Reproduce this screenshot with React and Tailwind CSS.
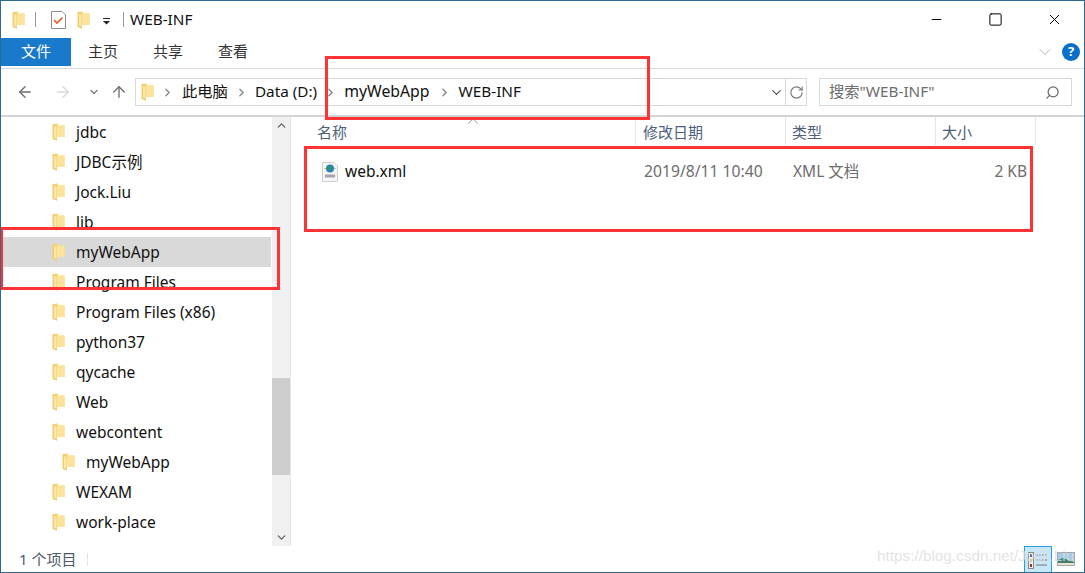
import { ArrowLeft, ArrowRight, ArrowUp, ChevronDown, ChevronRight, ChevronUp, RotateCw, Search, Minus, X, Square } from "lucide-react";

const FONT = "font-['Noto_Sans','Noto_Sans_CJK_SC',sans-serif]";

const navItems = [
  { name: "jdbc" },
  { name: "JDBC示例" },
  { name: "Jock.Liu" },
  { name: "lib" },
  { name: "myWebApp", selected: true },
  { name: "Program Files" },
  { name: "Program Files (x86)" },
  { name: "python37" },
  { name: "qycache" },
  { name: "Web" },
  { name: "webcontent" },
  { name: "myWebApp", child: true },
  { name: "WEXAM" },
  { name: "work-place" },
];

const Folder = ({ className = "" }) => (
  <svg width="13" height="18" viewBox="0 0 13 18" className={`shrink-0 ${className}`}>
    <path d="M1 1 L6 0.5 V2.5 H12.5 V14 H5 V15 H1 Z" fill="#f8d878" />
    <path d="M5 2.5 H12.5 V14 H5 Z" fill="#fbe39c" />
    <path d="M0.5 1 L5 2.5 V17.8 L0.5 16 Z" fill="#f3cb6c" />
    <path d="M2 3 L4.5 3.8 V15.8 L2 15 Z" fill="#fbe7a8" />
  </svg>
);

const XmlIcon = () => (
  <svg width="18" height="20" viewBox="0 0 18 20" className="shrink-0">
    <path d="M1.5 0.5 H13 L16.5 4 V19.5 H1.5 Z" fill="#f5f5f5" stroke="#cfcfcf" />
    <path d="M3 6.5 H5 M13 6.5 H15" stroke="#b9c4c9" />
    <rect x="4" y="12.5" width="10" height="3" fill="#a3a3b0" />
    <circle cx="9" cy="6.5" r="4" fill="#2b7fc4" />
    <path d="M6 5 L8.8 3.2 L10.2 5.5 L8.2 8.8 L6.4 7.5 Z" fill="#2f9d4e" />
    <path d="M10.6 7.5 L12.4 6.5 L11.4 9.2 Z" fill="#2f9d4e" />
  </svg>
);

const Chevron = () => <ChevronRight size={13} strokeWidth={2.4} className="text-[#858585] shrink-0" />;

const App = () => {
  return (
    <div className={`relative flex flex-col w-[1085px] h-[573px] overflow-hidden bg-white border border-[#2c6a94] text-[15.5px] text-[#111] ${FONT}`}>
      {/* title bar */}
      <div className="flex items-center h-[37px] shrink-0 pl-[11px]">
        <Folder />
        <div className="w-px h-[15px] bg-[#9a9a9a] ml-[10px] mr-[15px]" />
        <svg width="15" height="18" viewBox="0 0 15 18" className="shrink-0">
          <path d="M0.5 0.5 H11 L14.5 4 V17.5 H0.5 Z" fill="#fff" stroke="#8c8c8c" />
          <path d="M3 9 L6 12 L11.5 6.5" fill="none" stroke="#e8562a" strokeWidth="1.6" />
        </svg>
        <Folder className="ml-[11px]" />
        <svg width="9" height="7" viewBox="0 0 9 7" className="ml-[12px] mt-1 shrink-0">
          <rect x="1" y="0" width="7" height="1" fill="#222" />
          <path d="M1 3 H8 L4.5 6.5 Z" fill="#222" />
        </svg>
        <div className="w-px h-[15px] bg-[#9a9a9a] ml-[12px] mr-[6px]" />
        <span className="text-[15.3px] leading-none">WEB-INF</span>
        <div className="flex items-center ml-auto pr-[7px]">
          <div className="w-[46px] flex justify-center"><Minus size={15} strokeWidth={1} absoluteStrokeWidth className="text-black" /></div>
          <div className="w-[72px] flex justify-center"><Square size={15} strokeWidth={1} absoluteStrokeWidth className="text-black" /></div>
          <div className="w-[46px] flex justify-center"><X size={17} strokeWidth={1} absoluteStrokeWidth className="text-black" /></div>
        </div>
      </div>

      {/* ribbon tabs */}
      <div className="flex items-center h-[31px] shrink-0 border-b border-[#d9d9d9] pb-[3px]">
        <div className="flex items-center justify-center w-[70px] h-[28px] bg-[#1979ca] text-white text-[15px]">文件</div>
        <div className="flex items-center h-[28px] text-[15px] text-[#333]">
          <span className="ml-[17px]">主页</span>
          <span className="ml-[35px]">共享</span>
          <span className="ml-[35px]">查看</span>
        </div>
        <ChevronDown size={20} strokeWidth={1} className="ml-auto mr-[7px] text-[#a5a5a5]" />
        <div className="w-[18px] h-[18px] mr-[4px] rounded-full bg-[#0a6fc8] flex items-center justify-center text-white text-[13px] font-bold leading-none">?</div>
      </div>

      {/* address row */}
      <div className="flex items-center h-[48px] shrink-0 border-b-2 border-[#d4d4d4]">
        <ArrowLeft size={18} strokeWidth={1.8} className="ml-[15px] text-[#6e6e6e]" />
        <ArrowRight size={18} strokeWidth={1.8} className="ml-[20px] text-[#d9d9d9]" />
        <ChevronDown size={12} strokeWidth={2.4} className="ml-[16px] text-[#777]" />
        <ArrowUp size={18} strokeWidth={1.8} className="ml-[10px] text-[#6e6e6e]" />
        <div className="flex items-center ml-[7px] w-[651px] h-[28px] border border-[#d9d9d9] pl-[5px]">
          <Folder />
          <span className="ml-[7px]"><Chevron /></span>
          <span className="ml-[8px] pb-[2px] text-[15.3px]">此电脑</span>
          <span className="ml-[7px]"><Chevron /></span>
          <span className="ml-[7px] pb-[2px] text-[15.3px]">Data (D:)</span>
          <span className="ml-[7px]"><Chevron /></span>
          <span className="ml-[7px] text-[15.8px]">myWebApp</span>
          <span className="ml-[8px]"><Chevron /></span>
          <span className="ml-[8px] pb-[2px] text-[15.3px]">WEB-INF</span>
          <ChevronDown size={15} strokeWidth={2} className="ml-auto mr-[1px] text-[#555]" />
        </div>
        <div className="flex items-center justify-center w-[21px] h-[28px] border border-l-0 border-[#d9d9d9]">
          <RotateCw size={15} strokeWidth={1.8} className="text-[#777]" />
        </div>
        <div className="flex items-center justify-between ml-[12px] w-[253px] h-[28px] border border-[#d9d9d9] pl-[9px] pr-[11px] text-[15.3px] text-[#6d6d6d]">
          <span className="pb-[2px]">搜索"WEB-INF"</span>
          <Search size={15} strokeWidth={2} className="text-[#666] -scale-x-100" />
        </div>
      </div>

      {/* body */}
      <div className="flex flex-1 min-h-0">
        {/* nav tree */}
        <div className="w-[271px] shrink-0">
          {navItems.map((item, i) => (
            <div
              key={i}
              className={`flex items-center h-[30px] ml-px mr-px ${item.child ? "pl-[60px]" : "pl-[50px]"} ${item.selected ? "bg-[#d9d9d9]" : ""}`}
            >
              <Folder />
              <span className="ml-[11px] pt-[2px] leading-none">{item.name}</span>
            </div>
          ))}
        </div>
        {/* nav scrollbar */}
        <div className="flex flex-col w-[19px] shrink-0 bg-[#f0f0f0] border-r border-[#e8e8e8]">
          <div className="flex items-center justify-center h-[17px]"><ChevronUp size={13} strokeWidth={2.4} className="text-[#606060]" /></div>
          <div className="h-[244px]" />
          <div className="h-[97px] bg-[#cdcdcd]" />
          <div className="flex-1" />
          <div className="flex items-center justify-center h-[17px]"><ChevronDown size={13} strokeWidth={2.4} className="text-[#606060]" /></div>
        </div>

        {/* file list */}
        <div className="flex-1 min-w-0">
          <div className="relative flex h-[28px] text-[15px] text-[#4c607a]">
            <ChevronUp size={18} strokeWidth={1} className="absolute left-[173px] -top-[5px] text-[#777]" />
            <div className="w-[345px] pl-[26px] pt-[3px] flex items-center border-r border-[#e5e5e5]">名称</div>
            <div className="w-[150px] pl-[7px] pt-[3px] flex items-center border-r border-[#e5e5e5]">修改日期</div>
            <div className="w-[150px] pl-[6px] pt-[3px] flex items-center border-r border-[#e5e5e5]">类型</div>
            <div className="w-[100px] pl-[6px] pt-[3px] flex items-center border-r border-[#e5e5e5]">大小</div>
          </div>
          <div className="flex items-center h-[30px] mt-[12px] text-[15.5px]">
            <div className="w-[345px] pl-[30px] flex items-center">
              <XmlIcon />
              <span className="ml-[6px]">web.xml</span>
            </div>
            <div className="w-[150px] pl-[8px] text-[15.7px] text-[#6d6d6d]">2019/8/11 10:40</div>
            <div className="w-[150px] pl-[7px] text-[#6d6d6d]">XML 文档</div>
            <div className="w-[91px] text-right text-[#6d6d6d]">2 KB</div>
          </div>
        </div>
      </div>

      {/* status bar */}
      <div className="flex items-center h-[26px] shrink-0 pl-[18px] text-[15px] text-[#4c5a6a]">
        <span>1 个项目</span>
        <div className="w-px h-[13px] bg-[#e5e5e5] ml-[11px]" />
        <div className="flex items-center ml-auto pr-[9px]">
          <div className="flex items-center justify-center w-[28px] h-[29px] mt-[2px] bg-[#c9e6f7] border border-[#26a0da]">
            <svg width="20" height="17" viewBox="0 0 20 17">
              <rect x="0.5" y="0.5" width="5" height="16" fill="#f2f2f2" stroke="#8a8a8a" />
              <rect x="2" y="2" width="2" height="3" fill="#3f6fa8" />
              <rect x="2" y="7" width="2" height="3" fill="#c7b98a" />
              <rect x="2" y="12" width="2" height="3" fill="#b03020" />
              <path d="M8 3 H19 M8 8 H19" stroke="#777" strokeDasharray="2 1" />
              <path d="M8 13 H19" stroke="#777" />
            </svg>
          </div>
          <svg width="18" height="14" viewBox="0 0 18 14" className="ml-[5px]">
            <rect x="0.5" y="0.5" width="17" height="13" fill="#a4cbe3" stroke="#a8a8a8" />
            <path d="M1 8 L6 6 L17 10 V13 H1 Z" fill="#3f7f70" />
            <path d="M1 11 L17 11 V13 H1 Z" fill="#e8e4d0" />
          </svg>
        </div>
      </div>

      {/* watermark */}
      <span className="absolute left-[876px] top-[544px] text-[15.3px] text-[#dcdcdc]/80 font-['Liberation_Sans',sans-serif] whitespace-nowrap">https://blog.csdn.net/Jock.Liu</span>

      {/* red annotation boxes */}
      <div className="absolute left-[324px] top-[55px] w-[325px] h-[64px] border-[3px] border-[#ff3333]" />
      <div className="absolute left-[303px] top-[145px] w-[729px] h-[86px] border-[3px] border-[#ff3333]" />
      <div className="absolute -left-px top-[226px] w-[280px] h-[63px] border-[3px] border-[#ff3333]" />
    </div>
  );
};

export default App;
